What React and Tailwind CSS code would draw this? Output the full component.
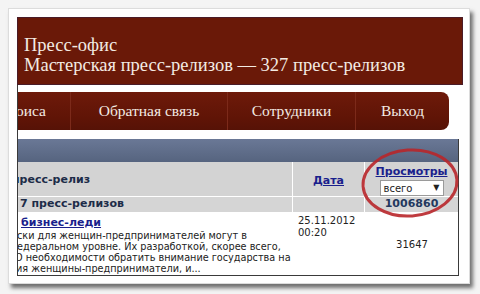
export default function App() {
  const serif = { fontFamily: '"Liberation Serif", "DejaVu Serif", serif' }

  return (
    <div className="relative w-[480px] h-[294px] overflow-hidden bg-[#f4f4f4] pl-[8px] pt-[8px]">
      <div className="w-[462px] h-[276px] bg-white border border-[#dcdcdc] shadow-[3px_4px_4px_rgba(0,0,0,0.55)] pl-[8px] pt-[8px]">
        <div className="w-[446px] h-[259px] flex flex-col" style={{ fontFamily: '"DejaVu Sans", Verdana, sans-serif' }}>
          {/* header */}
          <div className="h-[68px] shrink-0 bg-[#6a1908] border border-[#4a1c28] flex flex-col justify-end pb-[9px] pl-[6px] text-[18.5px] leading-[20px] text-[#f3ebe3]" style={serif}>
            <div>Пресс-офис</div>
            <div>Мастерская пресс-релизов — 327 пресс-релизов</div>
          </div>

          <div className="flex-1 flex flex-col border-l border-[#3a3a3a] mr-[4px] pt-[7px]">
            {/* nav */}
            <div className="w-[431px] h-[38px] shrink-0 flex rounded-r-[8px] bg-[linear-gradient(#6e1a0a,#5f1406_70%,#561206)] text-[15.5px] text-[#f3ebe3]" style={serif}>
              <div className="w-[53px] flex items-center overflow-hidden border-r border-[#7c2a1a]">
                <span className="ml-[-2px]">оиса</span>
              </div>
              <div className="w-[157px] flex items-center justify-center border-r border-[#7c2a1a]">Обратная связь</div>
              <div className="w-[128px] flex items-center justify-center border-r border-[#7c2a1a]">Сотрудники</div>
              <div className="flex-1 flex items-center justify-center">Выход</div>
            </div>

            {/* table */}
            <div className="flex-1 flex flex-col mt-[9px] border-r border-[#3a3a3a] border-b">
              <div className="h-[23px] shrink-0 bg-[linear-gradient(#6a7896,#56647f)]" />

              <div className="h-[34px] shrink-0 flex bg-[#d3d3d3] text-[11px] font-bold text-[#1d2c48]">
                <div className="w-[275px] flex items-center overflow-hidden border-r border-white pt-[3px]">
                  <span className="ml-[-6px]">пресс-релиз</span>
                </div>
                <div className="w-[72px] flex items-center justify-center border-r border-white pt-[4px]">
                  <span className="underline text-[#1a1f8c]">Дата</span>
                </div>
                <div className="flex-1 flex flex-col items-center pt-[3px]">
                  <span className="underline text-[#1a1f8c] leading-[13px]">Просмотры</span>
                  <div className="mt-[2px] w-[64px] h-[16px] bg-white border border-[#9a9a9a] flex items-center justify-between px-[3px] text-[10px] font-normal text-[#222]">
                    <span>всего</span>
                    <span className="text-[8px]">▼</span>
                  </div>
                </div>
              </div>

              <div className="h-[16px] shrink-0 flex bg-[#d5d5d5] border-t border-white text-[11px] font-bold text-[#1d2c48]">
                <div className="w-[275px] flex items-center overflow-hidden border-r border-white">
                  <span className="ml-[2px]">7 пресс-релизов</span>
                </div>
                <div className="w-[72px] border-r border-white" />
                <div className="flex-1 flex items-center justify-center text-[#23385e]">1006860</div>
              </div>

              <div className="flex-1 flex bg-white text-[9.7px] leading-[11px] text-[#222]">
                <div className="w-[276px] overflow-hidden pt-[4px] whitespace-nowrap">
                  <div className="ml-[3px] text-[11px] leading-[14px] font-bold underline text-[#1a1f8c]">бизнес-леди</div>
                  <div className="ml-[-1px]">ски для женщин-предпринимателей могут в</div>
                  <div className="ml-[-1px]">едеральном уровне. Их разработкой, скорее всего,</div>
                  <div className="ml-[-3px]">О необходимости обратить внимание государства на</div>
                  <div className="ml-[-2px]">ия женщины-предприниматели, и...</div>
                </div>
                <div className="w-[72px] pl-[4px] pt-[3px] leading-[12px] text-[10px]">
                  <div>25.11.2012</div>
                  <div>00:20</div>
                </div>
                <div className="flex-1 flex justify-center pt-[27px] text-[10px]">31647</div>
              </div>
            </div>
          </div>
        </div>
      </div>

      <svg className="absolute left-0 top-0 pointer-events-none" width="480" height="294">
        <ellipse cx="410" cy="183" rx="47" ry="33" fill="none" stroke="#b8262a" strokeWidth="3" strokeOpacity="0.9" transform="rotate(-4 410 183)" />
      </svg>
    </div>
  )
}
